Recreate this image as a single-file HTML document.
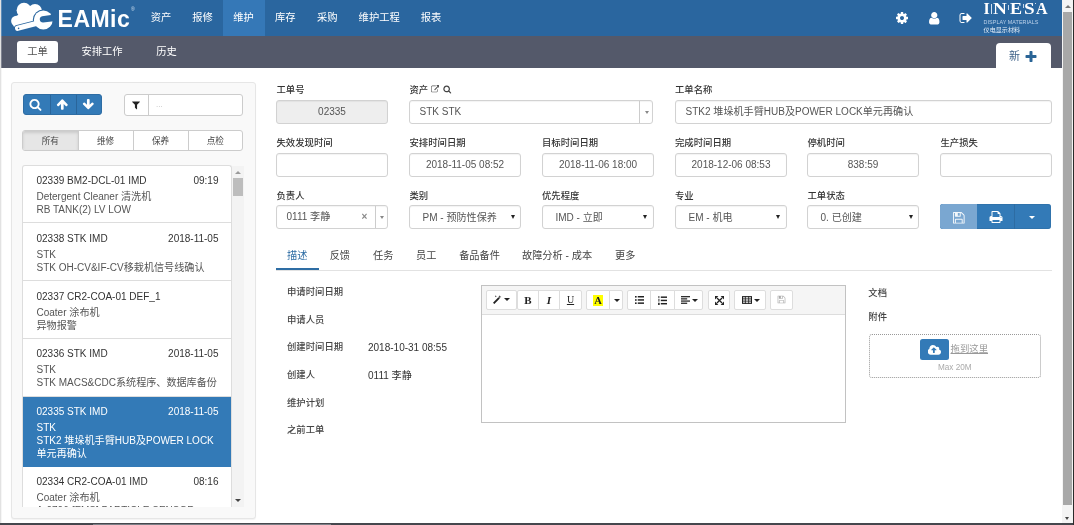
<!DOCTYPE html>
<html lang="zh-CN">
<head>
<meta charset="utf-8">
<title>EAMic</title>
<style>
*{box-sizing:border-box;margin:0;padding:0}
html,body{width:1074px;height:525px;overflow:hidden;background:#fff}
body{font-family:"Liberation Sans","Noto Sans CJK SC",sans-serif;font-size:11px;color:#333;position:relative}
.abs{position:absolute}
#frame{position:absolute;left:0;top:0;width:1074px;height:525px;overflow:hidden;background:#fff;will-change:transform}
#bl{left:0;top:0;width:1px;height:525px;background:#e2e2e2}
#bb{left:0;top:523px;width:1074px;height:2px;background:#45474d}
#br{left:1073px;top:0;width:1px;height:525px;background:#2b2b2b}
#sb{left:1062px;top:0;width:11px;height:523px;background:#f4f4f4}
#sb .thumb{position:absolute;left:1px;top:12px;width:9px;height:493px;background:#a8a8a8}
.tri-u{position:absolute;width:0;height:0;border-left:3px solid transparent;border-right:3px solid transparent;border-bottom:3px solid #777}
.tri-d{position:absolute;width:0;height:0;border-left:3px solid transparent;border-right:3px solid transparent;border-top:3px solid #444}
#nav{left:2px;top:0;width:1060px;height:36px;background:#2a669f}
.ni{position:absolute;top:0;height:36px;line-height:35px;color:#fff;font-size:10.3px;text-align:center;font-weight:400}
.ni.act{background:#3578b7}
#logo-t{position:absolute;left:55.6px;top:4.6px;font-size:23px;font-weight:bold;color:#fff;line-height:28px;letter-spacing:0.45px}
#sub{left:2px;top:36px;width:1060px;height:32px;background:#54596a}
.si{position:absolute;top:5px;height:22px;line-height:21px;color:#fff;font-size:10.3px;text-align:center;border-radius:3px;font-weight:400}
.si.act{background:#fff;color:#555;font-weight:400}
#newtab{left:996px;top:43px;width:55px;height:25px;background:#fff;border-radius:4px 4px 0 0;color:#3b5f86;font-size:11px;line-height:27px;padding-left:13px}
#lp{left:11px;top:82px;width:245px;height:437px;background:#f9f9f9;border:1px solid #e6e6e6;border-radius:3px;box-shadow:0 1px 1px rgba(0,0,0,.05)}
.bgrp{left:22.6px;top:94px;width:79px;height:21px;background:#337ab7;border:1px solid #2e6da4;border-radius:3px}
.bgrp i{position:absolute;top:0;width:1px;height:19px;background:#2a659a}
.fgrp{left:124px;top:94px;width:119px;height:22px;background:#fff;border:1px solid #ccc;border-radius:3px}
.fgrp i{position:absolute;left:23px;top:0;width:1px;height:20px;background:#ccc}
.tabs{left:22px;top:130px;width:221px;height:21px;background:#fff;border:1px solid #ccc;border-radius:3px;overflow:hidden}
.tabs div{position:absolute;top:0;height:19px;line-height:20.4px;font-size:8.6px;text-align:center;color:#444;border-left:1px solid #ccc}
.tabs div.on{background:#e6e6e6;border-left:0;box-shadow:inset 0 2px 3px rgba(0,0,0,.12)}
#list{left:22px;top:165px;width:210px;height:342px;overflow:hidden;background:#fff;border:1px solid #ddd;border-bottom:0;border-radius:3px 3px 0 0}
.it{position:absolute;left:0;width:208px;border-bottom:1px solid #ddd;color:#555}
.it .a{position:absolute;left:13.5px;top:8.6px;font-size:10px;line-height:14px;color:#333;white-space:nowrap}
.it .d{position:absolute;right:12.5px;top:8.6px;font-size:10px;line-height:14px;color:#333;white-space:nowrap}
.it .b{position:absolute;left:13.5px;top:24.5px;width:190px;font-size:10px;line-height:13px;color:#555}
.it.sel{background:#337ab7;border-color:#337ab7}
.it.sel .a,.it.sel .d,.it.sel .b{color:#fff}
.cj{font-size:10.1px}
#lsb{left:232px;top:166px;width:11.5px;height:341px;background:#f3f3f3}
#lsb .th{position:absolute;left:1.3px;top:12px;width:9.3px;height:18px;background:#bdbdbd}
.lbl{position:absolute;font-size:9.35px;font-weight:500;color:#333;line-height:12px;white-space:nowrap}
.inp{position:absolute;background:#fff;border:1px solid #d2d2d2;border-radius:3px;height:24px;line-height:22.5px;font-size:10px;color:#555;box-shadow:inset 0 1px 1px rgba(0,0,0,.05);white-space:nowrap;overflow:hidden}
.inp.c{text-align:center}
.inp.ro{background:#eee}
.inp.sel{line-height:24.5px}
.car{position:absolute;width:0;height:0;border-left:2.8px solid transparent;border-right:2.8px solid transparent;border-top:4px solid #222}
.car.g{border-top-color:#888;border-left-width:2px;border-right-width:2px;border-top-width:3px}
.vd{position:absolute;top:0;width:1px;height:22px;background:#ccc}
.tb{position:absolute;top:248px;height:22px;line-height:16px;font-size:10.2px;color:#444;white-space:nowrap}
.tb.on{color:#2e6da4}
.dl{position:absolute;left:287px;font-size:9.35px;font-weight:500;color:#444;line-height:12px;white-space:nowrap}
.dv{position:absolute;left:368px;font-size:10px;color:#333;line-height:14px;white-space:nowrap}
#ed{left:481px;top:285px;width:365px;height:138px;border:1px solid #c2c2c2;background:#fff}
#edt{position:absolute;left:0;top:0;width:363px;height:29px;background:#f5f5f5;border-bottom:1px solid #ddd}
.eb{position:absolute;top:4px;height:20px;background:#fff;border:1px solid #ddd;}
.eb.l{border-radius:2px 0 0 2px}.eb.r{border-radius:0 2px 2px 0}.eb.s{border-radius:2px}
.eb span{position:absolute;left:0;top:0;width:100%;text-align:center;font-family:"Liberation Serif",serif;font-size:11px;line-height:18px;color:#222}
</style>
</head>
<body>
<div id="frame">
<div class="abs" style="left:1px;top:0;width:1px;height:36px;background:#5d8cb9"></div><div class="abs" style="left:1px;top:36px;width:1px;height:32px;background:#7f8391"></div><div class="abs" style="left:1px;top:68px;width:1px;height:455px;background:#f6f6f6"></div>
<div id="nav" class="abs">
<svg class="abs" style="left:6px;top:0" width="50" height="36" viewBox="8 0 50 36">
<g fill="#fff">
<circle cx="16.3" cy="21" r="5.2"/><circle cx="24" cy="10.2" r="7.4"/><circle cx="35" cy="10.8" r="6.9"/><circle cx="39" cy="13" r="4"/>
<path d="M16.5 16 L22 12 L40 9 L43 14 L40 22 L14 27 L12 22 Z"/>
</g>
<g stroke="#2a669f" stroke-width="1.8" fill="#fff">
<path d="M17.6 28.3 L40 22.6" stroke-width="7" stroke-linecap="round" fill="none"/>
<circle cx="43.3" cy="20" r="9.6"/>
</g>
<path d="M17.6 28.3 L40 22.6" stroke="#fff" stroke-width="5.2" stroke-linecap="round" fill="none"/>
<circle cx="43.3" cy="20" r="9.4" fill="#fff"/>
<path d="M42.2 16.3 L56 14.3 L56 21 L43 22.6 A3.2 3.2 0 0 1 42.2 16.3 Z" fill="#2a669f"/>
<circle cx="18.6" cy="28.4" r="0.8" fill="#2a669f"/>
</svg>
<div id="logo-t">EAMic</div><div class="abs" style="left:129px;top:6px;font-size:5px;color:#cfe0f0;line-height:6px">®</div>
<div class="ni" style="left:138.6px;width:41px">资产</div>
<div class="ni" style="left:180px;width:41px">报修</div>
<div class="ni act" style="left:220.6px;width:42px">维护</div>
<div class="ni" style="left:262.8px;width:41px">库存</div>
<div class="ni" style="left:304.8px;width:41px">采购</div>
<div class="ni" style="left:346.2px;width:62px">维护工程</div>
<div class="ni" style="left:408px;width:42px">报表</div>
<svg class="abs" style="left:893.1px;top:10.9px;" width="14" height="14" viewBox="0 0 1792 1792"><path fill="#fff" d="M1152 896q0-106-75-181t-181-75-181 75-75 181 75 181 181 75 181-75 75-181zm512-109v222q0 12-8 23t-20 13l-185 28q-19 54-39 91 35 50 107 138 10 12 10 25t-9 23q-27 37-99 108t-94 71q-12 0-26-9l-138-108q-44 23-91 38-16 136-29 186-7 28-36 28h-222q-14 0-24.500-8.500t-11.500-21.500l-28-184q-49-16-90-37l-141 107q-10 9-25 9-14 0-25-11-126-114-165-168-7-10-7-23 0-12 8-23 15-21 51-66.500t54-70.500q-27-50-41-99l-183-27q-13-2-21-12.500t-8-23.500v-222q0-12 8-23t19-13l186-28q14-46 39-92-40-57-107-138-10-12-10-24 0-10 9-23 26-36 98.500-107.500t94.500-71.500q13 0 26 10l138 107q44-23 91-38 16-136 29-186 7-28 36-28h222q14 0 24.500 8.500t11.500 21.500l28 184q49 16 90 37l142-107q9-9 24-9 13 0 25 10 129 119 165 170 7 8 7 22 0 12-8 23-15 21-51 66.500t-54 70.500q26 50 41 98l183 28q13 2 21 12.500t8 23.500z"/></svg>
<svg class="abs" style="left:924.8px;top:10.9px;" width="14.5" height="14.5" viewBox="0 0 1792 1792"><path fill="#fff" d="M1536 1399q0 109-62.500 187t-150.500 78h-854q-88 0-150.500-78t-62.500-187q0-85 8.500-160.500t31.500-152 58.500-131 94-89 134.500-34.500q131 128 313 128t313-128q76 0 134.500 34.500t94 89 58.500 131 31.500 152 8.500 160.500zm-256-887q0 159-112.500 271.500t-271.500 112.500-271.500-112.500-112.500-271.500 112.500-271.500 271.500-112.500 271.500 112.500 112.500 271.500z"/></svg>
<svg class="abs" style="left:957.4px;top:10.8px;" width="14" height="14" viewBox="0 0 1792 1792"><path fill="#fff" d="M704 1440q0 4 1 20t.500 26.500-3 23.500-10 19.500-20.500 6.500h-320q-119 0-203.500-84.500t-84.500-203.500v-704q0-119 84.500-203.500t203.500-84.500h320q13 0 22.500 9.500t9.500 22.500q0 4 1 20t.500 26.500-3 23.500-10 19.500-20.500 6.500h-320q-66 0-113 47t-47 113v704q0 66 47 113t113 47h312l11.500 1 11.500 3 8 5.500 7 9 2 13.500zm928-544q0 26-19 45l-544 544q-19 19-45 19t-45-19-19-45v-288h-448q-26 0-45-19t-19-45v-384q0-26 19-45t45-19h448v-288q0-26 19-45t45-19 45 19l544 544q19 19 19 45z"/></svg>
<div class="abs" style="left:981.6px;top:0.2px;font-family:'Liberation Serif',serif;font-weight:bold;font-size:16px;line-height:18px;color:#fff;transform:scaleX(1.0);transform-origin:0 0">I</div>
<div class="abs" style="left:991.3px;top:0.2px;font-family:'Liberation Serif',serif;font-weight:bold;font-size:16px;line-height:18px;color:#fff;transform:scaleX(1.2);transform-origin:0 0">N</div>
<div class="abs" style="left:1008px;top:0.2px;font-family:'Liberation Serif',serif;font-weight:bold;font-size:16px;line-height:18px;color:#fff;transform:scaleX(1.13);transform-origin:0 0">E</div>
<div class="abs" style="left:1022.2px;top:0.2px;font-family:'Liberation Serif',serif;font-weight:bold;font-size:16px;line-height:18px;color:#fff;transform:scaleX(1.2);transform-origin:0 0">S</div>
<div class="abs" style="left:1034.1px;top:0.2px;font-family:'Liberation Serif',serif;font-weight:bold;font-size:16px;line-height:18px;color:#fff;transform:scaleX(1.0);transform-origin:0 0">A</div>
<div class="abs" style="left:989px;top:3.5px;width:1px;height:10.3px;background:#d4e3f2"></div>
<div class="abs" style="left:1006px;top:5px;width:1px;height:4.5px;background:#c4d8ec"></div>
<div class="abs" style="left:1020.5px;top:3.5px;width:1px;height:4px;background:#c4d8ec"></div>
<div class="abs" style="left:1033px;top:3.3px;width:1.2px;height:1.2px;background:#d4e3f2"></div>
<div class="abs" style="left:981.6px;top:18.5px;font-size:5.4px;line-height:6px;color:#bcd2ea;white-space:nowrap;letter-spacing:0.05px">DISPLAY MATERIALS</div>
<div class="abs" style="left:981.6px;top:25.5px;font-size:6.1px;line-height:7px;color:#e4eef8;white-space:nowrap">仪电显示材料</div>
</div>
<div id="sub" class="abs">
<div class="si act" style="left:15px;width:41px">工单</div>
<div class="si" style="left:69px;width:62px">安排工作</div>
<div class="si" style="left:144px;width:41px">历史</div>
</div>
<div id="newtab" class="abs">新</div>
<svg class="abs" style="left:1024px;top:49.5px;" width="14" height="14" viewBox="0 0 1792 1792"><path fill="#2a6496" d="M1600 736v192q0 40-28 68t-68 28h-416v416q0 40-28 68t-68 28h-192q-40 0-68-28t-28-68v-416h-416q-40 0-68-28t-28-68v-192q0-40 28-68t68-28h416v-416q0-40 28-68t68-28h192q40 0 68 28t28 68v416h416q40 0 68 28t28 68z"/></svg>
<div id="lp" class="abs"></div>
<div class="abs bgrp"><i style="left:26px"></i><i style="left:52px"></i></div>
<svg class="abs" style="left:28.9px;top:97.8px;" width="12.9" height="12.9" viewBox="0 0 1792 1792"><path fill="#fff" d="M1216 832q0-185-131.500-316.500t-316.500-131.500-316.500 131.500-131.500 316.500 131.500 316.500 316.500 131.500 316.500-131.500 131.500-316.500zm512 832q0 52-38 90t-90 38q-54 0-90-38l-343-342q-179 124-399 124-143 0-273.500-55.500t-225-150-150-225-55.500-273.500 55.500-273.500 150-225 225-150 273.500-55.500 273.500 55.500 225 150 150 225 55.500 273.500q0 220-124 399l343 343q37 37 37 90z"/></svg>
<svg class="abs" style="left:56px;top:97.6px;" width="12.6" height="12.6" viewBox="0 0 1792 1792"><path fill="#fff" d="M1675 971q0 51-37 90l-75 75q-38 38-91 38-54 0-90-38l-294-293v704q0 52-37.500 84.500t-90.500 32.500h-128q-53 0-90.500-32.500t-37.500-84.500v-704l-294 293q-36 38-90 38t-90-38l-75-75q-38-38-38-90 0-53 38-91l651-651q35-37 90-37 54 0 91 37l651 651q37 39 37 91z"/></svg>
<svg class="abs" style="left:82.4px;top:97.6px;" width="12.6" height="12.6" viewBox="0 0 1792 1792"><path fill="#fff" d="M1675 832q0 53-37 90l-651 652q-39 37-91 37-53 0-90-37l-651-652q-38-36-38-90 0-53 38-91l74-75q39-37 91-37 53 0 90 37l294 294v-704q0-52 38-90t90-38h128q52 0 90 38t38 90v704l294-294q37-37 90-37 52 0 91 37l75 75q37 39 37 91z"/></svg>
<div class="abs fgrp"><i></i></div>
<svg class="abs" style="left:131px;top:99.5px;" width="10" height="10" viewBox="0 0 1792 1792"><path fill="#222" d="M1595 295q17 41-14 70l-493 493v742q0 42-39 59-13 5-25 5-27 0-45-19l-256-256q-19-19-19-45v-486l-493-493q-31-29-14-70 17-39 59-39h1280q42 0 59 39z"/></svg>
<div class="abs" style="left:156px;top:100px;font-size:8px;color:#bbb;line-height:10px">...</div>
<div class="abs tabs"><div class="on" style="left:0;width:54.5px">所有</div><div style="left:54.5px;width:55px">维修</div><div style="left:109.5px;width:55px">保养</div><div style="left:164.6px;width:54.4px">点检</div></div>
<div id="list" class="abs">
<div class="it" style="top:-0.5px;height:57.8px"><div class="a">02339 BM2-DCL-01 IMD</div><div class="d">09:19</div><div class="b">Detergent Cleaner <span class="cj">清洗机</span><br>RB TANK(2) LV LOW</div></div>
<div class="it" style="top:57.3px;height:57.8px"><div class="a">02338 STK IMD</div><div class="d">2018-11-05</div><div class="b">STK<br>STK OH-CV&amp;IF-CV<span class="cj">移栽机信号线确认</span></div></div>
<div class="it" style="top:115.1px;height:57.8px"><div class="a">02337 CR2-COA-01 DEF_1</div><div class="d"></div><div class="b">Coater <span class="cj">涂布机</span><br><span class="cj">异物报警</span></div></div>
<div class="it" style="top:172.9px;height:57.8px"><div class="a">02336 STK IMD</div><div class="d">2018-11-05</div><div class="b">STK<br>STK MACS&amp;CDC<span class="cj">系统程序、数据库备份</span></div></div>
<div class="it sel" style="top:230.7px;height:70px"><div class="a">02335 STK IMD</div><div class="d">2018-11-05</div><div class="b">STK<br>STK2 <span class="cj">堆垛机手臂</span>HUB<span class="cj">及</span>POWER LOCK<br><span class="cj">单元再确认</span></div></div>
<div class="it" style="top:300.7px;height:58px"><div class="a">02334 CR2-COA-01 IMD</div><div class="d">08:16</div><div class="b">Coater <span class="cj">涂布机</span><br>A-0706-[FMS] PARTICLE SENSOR</div></div>
</div>
<div id="lsb" class="abs"><div class="tri-u" style="left:3px;top:5px;border-bottom-color:#9a9a9a"></div><div class="th"></div><div class="tri-d" style="left:3px;top:333px"></div></div>
<div class="lbl" style="left:276.5px;top:83.5px">工单号</div>
<div class="inp c ro" style="left:276px;top:100px;width:112px">02335</div>
<div class="lbl" style="left:409.5px;top:83.5px">资产</div>
<svg class="abs" style="left:430.8px;top:85.2px;" width="8.5" height="8.5" viewBox="0 0 1792 1792"><path fill="#555" d="M1408 928v320q0 119-84.500 203.500t-203.500 84.500h-832q-119 0-203.500-84.500t-84.500-203.500v-832q0-119 84.500-203.500t203.500-84.500h704q14 0 23 9t9 23v64q0 14-9 23t-23 9h-704q-66 0-113 47t-47 113v832q0 66 47 113t113 47h832q66 0 113-47t47-113v-320q0-14 9-23t23-9h64q14 0 23 9t9 23zm384-864v512q0 26-19 45t-45 19-45-19l-176-176-652 652q-10 10-23 10t-23-10l-114-114q-10-10-10-23t10-23l652-652-176-176q-19-19-19-45t19-45 45-19h512q26 0 45 19t19 45z"/></svg>
<svg class="abs" style="left:443px;top:85.2px;" width="8.5" height="8.5" viewBox="0 0 1792 1792"><path fill="#444" d="M1216 832q0-185-131.500-316.500t-316.500-131.500-316.500 131.500-131.500 316.500 131.500 316.500 316.500 131.500 316.500-131.500 131.500-316.500zm512 832q0 52-38 90t-90 38q-54 0-90-38l-343-342q-179 124-399 124-143 0-273.500-55.500t-225-150-150-225-55.500-273.500 55.500-273.500 150-225 225-150 273.500-55.500 273.500 55.500 225 150 150 225 55.500 273.500q0 220-124 399l343 343q37 37 37 90z"/></svg>
<div class="inp " style="left:409px;top:100px;width:244px;padding-left:9.5px">STK STK<i class="vd" style="left:229px"></i><b class="car g" style="left:234.5px;top:10px"></b></div>
<div class="lbl" style="left:675px;top:83.5px">工单名称</div>
<div class="inp " style="left:675px;top:100px;width:377px;padding-left:9.5px">STK2 <span class="cj">堆垛机手臂</span>HUB<span class="cj">及</span>POWER LOCK<span class="cj">单元再确认</span></div>
<div class="lbl" style="left:276.5px;top:136.5px">失效发现时间</div>
<div class="inp " style="left:276px;top:152.5px;width:112px"></div>
<div class="lbl" style="left:409.5px;top:136.5px">安排时间日期</div>
<div class="inp c" style="left:409px;top:152.5px;width:112px">2018-11-05 08:52</div>
<div class="lbl" style="left:542px;top:136.5px">目标时间日期</div>
<div class="inp c" style="left:542px;top:152.5px;width:112px">2018-11-06 18:00</div>
<div class="lbl" style="left:675px;top:136.5px">完成时间日期</div>
<div class="inp c" style="left:675px;top:152.5px;width:112px">2018-12-06 08:53</div>
<div class="lbl" style="left:807.5px;top:136.5px">停机时间</div>
<div class="inp c" style="left:807px;top:152.5px;width:112px">838:59</div>
<div class="lbl" style="left:940.5px;top:136.5px">生产损失</div>
<div class="inp " style="left:940px;top:152.5px;width:112px"></div>
<div class="lbl" style="left:276.5px;top:189.6px">负责人</div>
<div class="inp " style="left:276px;top:205px;width:112px;padding-left:9.5px">0111 <span class="cj">李静</span><span style="position:absolute;left:84.5px;top:-0.5px;font-size:10px;color:#888;font-weight:bold">×</span><i class="vd" style="left:98px"></i><b class="car g" style="left:102.5px;top:10px"></b></div>
<div class="lbl" style="left:409.5px;top:189.6px">类别</div>
<div class="inp sel" style="left:409px;top:205px;width:112px;padding-left:12.5px">PM - <span class="cj">预防性保养</span><b class="car" style="left:100.8px;top:9px"></b></div>
<div class="lbl" style="left:542px;top:189.6px">优先程度</div>
<div class="inp sel" style="left:542px;top:205px;width:112px;padding-left:12.5px">IMD - <span class="cj">立即</span><b class="car" style="left:100.3px;top:9px"></b></div>
<div class="lbl" style="left:675px;top:189.6px">专业</div>
<div class="inp sel" style="left:675px;top:205px;width:112px;padding-left:12.5px">EM - <span class="cj">机电</span><b class="car" style="left:100.3px;top:9px"></b></div>
<div class="lbl" style="left:807.5px;top:189.6px">工单状态</div>
<div class="inp sel" style="left:807px;top:205px;width:112px;padding-left:12.5px">0. <span class="cj">已创建</span><b class="car" style="left:101px;top:9px"></b></div>
<div class="abs" style="left:940px;top:204px;width:111px;height:25px;background:#337ab7;border-radius:3px;overflow:hidden;box-shadow:inset 0 0 0 1px rgba(46,109,164,.55)"><div class="abs" style="left:0;top:0;width:37px;height:25px;background:#7aa7d1"></div><div class="abs" style="left:73.5px;top:0;width:1px;height:25px;background:#2d6ca3"></div></div>
<svg class="abs" style="left:951.8px;top:210.6px;" width="13.6" height="13.6" viewBox="0 0 1792 1792"><path fill="#f2f7fb" d="M512 1536h768v-384h-768v384zm896 0h128v-896q0-14-10-38.500t-20-34.500l-281-281q-10-10-34-20t-39-10v416q0 40-28 68t-68 28h-576q-40 0-68-28t-28-68v-416h-128v1280h128v-416q0-40 28-68t68-28h832q40 0 68 28t28 68v416zm-384-928v-320q0-13-9.500-22.500t-22.500-9.500h-192q-13 0-22.500 9.500t-9.500 22.500v320q0 13 9.500 22.500t22.500 9.500h192q13 0 22.500-9.500t9.500-22.500zm640 32v928q0 40-28 68t-68 28h-1344q-40 0-68-28t-28-68v-1344q0-40 28-68t68-28h928q40 0 88 20t76 48l280 280q28 28 48 76t20 88z"/></svg>
<svg class="abs" style="left:988.6px;top:210.2px;" width="14" height="14" viewBox="0 0 1792 1792"><path fill="#fff" d="M448 1536h896v-256h-896v256zm0-640h896v-384h-160q-40 0-68-28t-28-68v-160h-640v640zm1152 64q0-26-19-45t-45-19-45 19-19 45 19 45 45 19 45-19 19-45zm128 0v416q0 13-9.500 22.500t-22.500 9.500h-224v160q0 40-28 68t-68 28h-960q-40 0-68-28t-28-68v-160h-224q-13 0-22.500-9.500t-9.500-22.500v-416q0-79 56.500-135.500t135.500-56.500h64v-544q0-40 28-68t68-28h672q40 0 88 20t76 48l152 152q28 28 48 76t20 88v256h64q79 0 135.500 56.500t56.500 135.500z"/></svg>
<div class="car abs" style="left:1029.3px;top:216px;border-top-color:#fff;border-left-width:3.3px;border-right-width:3.3px;border-top-width:3.4px"></div>
<div class="abs" style="left:276px;top:270px;width:776px;height:1px;background:#e2e2e2"></div>
<div class="abs" style="left:276px;top:268px;width:43px;height:2px;background:#2e6da4"></div>
<div class="tb on" style="left:287px">描述</div>
<div class="tb" style="left:329.7px">反馈</div>
<div class="tb" style="left:373px">任务</div>
<div class="tb" style="left:416px">员工</div>
<div class="tb" style="left:459.2px">备品备件</div>
<div class="tb" style="left:522px">故障分析 - 成本</div>
<div class="tb" style="left:615px">更多</div>
<div class="dl" style="top:285.8px">申请时间日期</div>
<div class="dl" style="top:313.5px">申请人员</div>
<div class="dl" style="top:341.2px">创建时间日期</div>
<div class="dv" style="top:341.4px">2018-10-31 08:55</div>
<div class="dl" style="top:368.9px">创建人</div>
<div class="dv" style="top:369.1px">0111 <span class="cj">李静</span></div>
<div class="dl" style="top:396.6px">维护计划</div>
<div class="dl" style="top:424.3px">之前工单</div>
<div id="ed" class="abs"><div id="edt">
<div class="eb s" style="left:4px;width:31px"></div>
<div class="eb l" style="left:35px;width:22px"><span style="font-weight:bold">B</span></div>
<div class="eb " style="left:56px;width:22px"><span style="font-style:italic;font-weight:bold">I</span></div>
<div class="eb r" style="left:77px;width:23px"><span style="text-decoration:underline;font-size:10px">U</span></div>
<div class="eb l" style="left:104px;width:24px"><span><b style="background:#ff0;padding:0 1.5px;font-size:10.5px">A</b></span></div>
<div class="eb r" style="left:127px;width:14px"><b class="car" style="left:4px;top:8px;border-left-width:3px;border-right-width:3px;border-top-width:3.5px"></b></div>
<div class="eb l" style="left:145px;width:24px"><svg class="abs" style="left:7px;top:5px" width="9.2" height="8" viewBox="0 0 8 7"><g fill="#222"><rect x="0" y="0" width="1.4" height="1.4"/><rect x="0" y="2.8" width="1.4" height="1.4"/><rect x="0" y="5.6" width="1.4" height="1.4"/><rect x="2.4" y="0" width="5.6" height="1.3"/><rect x="2.4" y="2.8" width="5.6" height="1.3"/><rect x="2.4" y="5.6" width="5.6" height="1.3"/></g></svg></div>
<div class="eb " style="left:168px;width:25px"><svg class="abs" style="left:7px;top:4.500px" width="9.2" height="9" viewBox="0 0 8 8"><g fill="#222"><rect x="0.3" y="0" width="0.8" height="2"/><rect x="0" y="3" width="1.4" height="0.8"/><rect x="0.3" y="3.8" width="0.8" height="1.2"/><rect x="0" y="6" width="1.4" height="2"/><rect x="2.4" y="0.4" width="5.6" height="1.3"/><rect x="2.4" y="3.3" width="5.6" height="1.3"/><rect x="2.4" y="6.2" width="5.6" height="1.3"/></g></svg></div>
<div class="eb r" style="left:192px;width:29px"><svg class="abs" style="left:5.500px;top:5px" width="9" height="8" viewBox="0 0 8 7"><g fill="#222"><rect x="0" y="0" width="8" height="1.1"/><rect x="0" y="1.95" width="5.5" height="1.1"/><rect x="0" y="3.9" width="8" height="1.1"/><rect x="0" y="5.85" width="5.5" height="1.1"/></g></svg><b class="car" style="left:17px;top:8px;border-left-width:3px;border-right-width:3px;border-top-width:3.5px"></b></div>
<div class="eb s" style="left:226px;width:22px"><svg class="abs" style="left:5.500px;top:4.500px" width="9" height="9" viewBox="0 0 9 9"><g fill="#222"><path d="M0 0h3.400L0 3.400zM9 0v3.400L5.600 0zM0 9V5.600L3.400 9zM9 9H5.600L9 5.600z"/><path d="M1.500 2.400l.9-.9 5.100 5.100-.9.900zM6.600 1.500l.9.900-5.100 5.100-.9-.9z"/></g></svg></div>
<div class="eb s" style="left:252px;width:32px"><svg class="abs" style="left:6.500px;top:5px" width="10" height="8" viewBox="0 0 9 7"><rect x="0.500" y="0.500" width="8" height="6" fill="none" stroke="#222" stroke-width="1"/><path d="M0 2.500h9M0 4.500h9M3 0v7M6 0v7" stroke="#222" stroke-width="0.800" fill="none"/></svg><b class="car" style="left:19px;top:8px;border-left-width:3px;border-right-width:3px;border-top-width:3.5px"></b></div>
<div class="eb s" style="left:288px;width:23px"></div>
</div></div>
<svg class="abs" style="left:493px;top:294.500px" width="9" height="9" viewBox="0 0 8 8"><path d="M0.600 7.400 L5.400 2.600" stroke="#222" stroke-width="1.700" fill="none"/><path d="M6 0.300l.4 1 1 .4-1 .4-.4 1-.4-1-1-.4 1-.4z M2.500 0.200l.3.600.6.300-.6.300-.3.600-.3-.600-.6-.3.6-.3z" fill="#222"/></svg>
<b class="car abs" style="left:504px;top:298px;border-left-width:3px;border-right-width:3px;border-top-width:3.5px"></b>
<svg class="abs" style="left:777px;top:295px;" width="9" height="9" viewBox="0 0 1792 1792"><path fill="#aaa" d="M512 1536h768v-384h-768v384zm896 0h128v-896q0-14-10-38.500t-20-34.500l-281-281q-10-10-34-20t-39-10v416q0 40-28 68t-68 28h-576q-40 0-68-28t-28-68v-416h-128v1280h128v-416q0-40 28-68t68-28h832q40 0 68 28t28 68v416zm-384-928v-320q0-13-9.500-22.500t-22.500-9.500h-192q-13 0-22.500 9.500t-9.500 22.500v320q0 13 9.500 22.500t22.500 9.500h192q13 0 22.500-9.500t9.500-22.500zm640 32v928q0 40-28 68t-68 28h-1344q-40 0-68-28t-28-68v-1344q0-40 28-68t68-28h928q40 0 88 20t76 48l280 280q28 28 48 76t20 88z"/></svg>
<div class="dl" style="left:868.3px;top:286.7px">文档</div>
<div class="dl" style="left:868.3px;top:310.7px">附件</div>
<div class="abs" style="left:868.5px;top:334px;width:172px;height:44px;border:1px dotted #999;border-radius:3px"></div>
<div class="abs" style="left:920px;top:339px;width:28.5px;height:21px;background:#337ab7;border-radius:2.500px"></div>
<svg class="abs" style="left:927.5px;top:343.5px;" width="13.5" height="12.5" viewBox="0 0 1920 1792"><path fill="#fff" d="M1216 864q0-14-9-23l-352-352q-9-9-23-9t-23 9l-351 351q-10 12-10 24 0 14 9 23t23 9h224v352q0 13 9.500 22.500t22.500 9.500h192q13 0 22.500-9.500t9.500-22.500v-352h224q13 0 22.500-9.500t9.500-22.500zm640 288q0 159-112.500 271.500t-271.500 112.500h-1088q-185 0-316.500-131.500t-131.500-316.500q0-130 70-240t188-165q-2-30-2-43 0-212 150-362t362-150q156 0 285.500 87t188.500 231q71-62 166-62 106 0 181 75t75 181q0 76-41 138 130 31 213.500 135.500t83.500 238.500z"/></svg>
<div class="abs" style="left:950.5px;top:342.5px;font-size:9.4px;line-height:12px;color:#999;text-decoration:underline;white-space:nowrap">拖到这里</div>
<div class="abs" style="left:938px;top:363px;font-size:8.2px;line-height:10px;color:#aaa;white-space:nowrap">Max 20M</div>
<div id="sb" class="abs"><div class="tri-u" style="left:2.500px;top:5px"></div><div class="thumb"></div><div class="tri-d" style="left:3px;top:516.5px;border-left-width:2.5px;border-right-width:2.5px"></div></div>
<div id="bl" class="abs"></div><div id="bb" class="abs"></div><div class="abs" style="left:93px;top:524px;width:238px;height:1px;background:#7d8087"></div><div id="br" class="abs"></div>
</div>
</body>
</html>
